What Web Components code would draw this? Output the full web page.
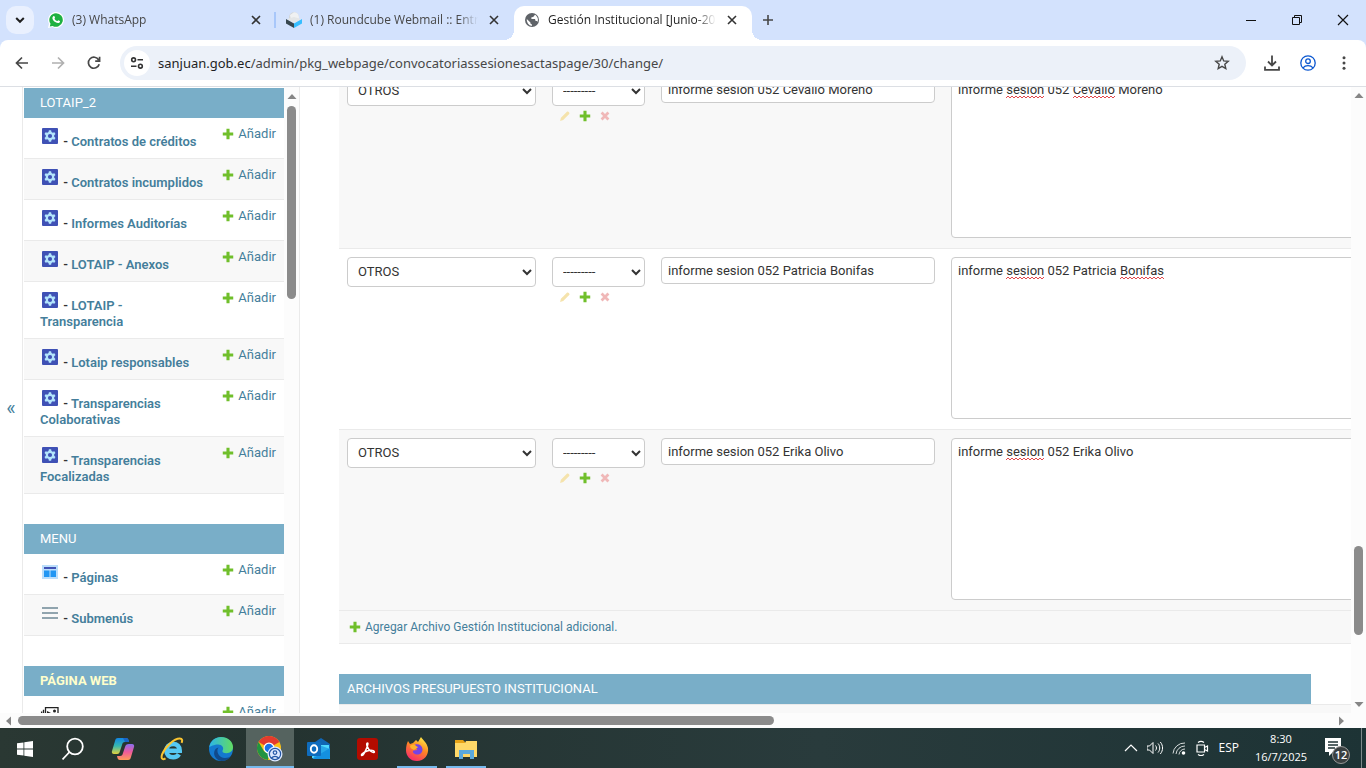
<!DOCTYPE html>
<html lang="es">
<head>
<meta charset="utf-8">
<title>Gestión Institucional [Junio-2025]</title>
<style>
	html, body { height: 100%; margin: 0; }
	body {
		display: flex;
		flex-direction: column;
		overflow: hidden;
		background: #fff;
		color: #333;
		font-family: Roboto, "Liberation Sans", sans-serif;
		font-size: 13px;
		line-height: 16px;
	}
	.view { flex: 1; min-height: 0; display: flex; }
</style>
</head>
<body>
<browser-tabs>
	<browser-tab icon="whatsapp" label="(3) WhatsApp"></browser-tab>
	<browser-tab icon="roundcube" label="(1) Roundcube Webmail :: Entrada"></browser-tab>
	<browser-tab icon="globe" label="Gestión Institucional [Junio-2025]" active></browser-tab>
</browser-tabs>
<browser-toolbar host="sanjuan.gob.ec" path="/admin/pkg_webpage/convocatoriassesionesactaspage/30/change/"></browser-toolbar>
<div class="view">
	<admin-sidebar>
		<admin-module caption="LOTAIP_2" items="gear:Contratos de créditos|gear:Contratos incumplidos|gear:Informes Auditorías|gear:LOTAIP - Anexos|gear:LOTAIP - Transparencia|gear:Lotaip responsables|gear:Transparencias Colaborativas|gear:Transparencias Focalizadas"></admin-module>
		<admin-module caption="MENU" items="layout:Páginas|lines:Submenús"></admin-module>
		<admin-module caption="PÁGINA WEB" current items="gallery:"></admin-module>
	</admin-sidebar>
	<admin-content>
		<inline-files></inline-files>
		<inline-heading>ARCHIVOS PRESUPUESTO INSTITUCIONAL</inline-heading>
	</admin-content>
	<scroll-bar style="--before: 445; --thumb: 89; --after: 64"></scroll-bar>
</div>
<scroll-bar horizontal style="--before: 4; --thumb: 756; --after: 562"></scroll-bar>
<task-bar></task-bar>

<script>
const ICONS = {
	whatsapp: `<svg viewBox="0 0 16 16"><path fill="#fff" d="M8 0a8 8 0 1 1-3.700 15.100L0 16l1-4.200A8 8 0 0 1 8 0z"/><path fill="#1fb141" d="M8 1.200a6.800 6.800 0 1 1-3.400 12.700L1.800 14.500l.7-2.700A6.800 6.800 0 0 1 8 1.200z"/><path fill="#fff" d="M5.300 4.200c.5-.4 1-.3 1.200.2l.5 1.200c.1.400-.5.900-.5 1.100.6 1.200 1.500 1.900 2.700 2.400.4.100.8-.9 1.200-.8l1.400.7c.4.200.2 1.200-.3 1.600-1 .9-2.500.6-4.300-.6S4.300 7.200 4.400 5.900c0-.7.400-1.300.9-1.700z"/></svg>`,
	roundcube: `<svg viewBox="0 0 16 16"><path fill="#37474f" d="M0 7l8 4.500V16L0 11.500z"/><path fill="#37beff" d="M16 7l-8 4.500V16l8-4.500z"/><circle cx="8" cy="5.200" r="5" fill="#d4d7d8"/><path fill="#f0f1f2" d="M8 .2a5 5 0 0 1 2.500 9.300L5 9 4 3z"/><path fill="#e4e6e7" d="M1 7l7-2 7 2-7 4z"/></svg>`,
	globe: `<svg viewBox="0 0 16 16"><circle cx="8" cy="8" r="7" fill="#5f6368"/><path fill="#fff" d="M2.800 7l3.600 3.500v1l1.500 1V14A6 6 0 0 1 2.800 7zM12.800 4.500c-.4-.9-1-1.400-1.800-1.800L9.200 5 7.500 5.300 7.200 6.700l1.300.4H11l.6 2h1.300l.5.900c1-2 .6-4-.6-5.500z"/></svg>`,
	close: `<svg viewBox="0 0 16 16"><path stroke="currentColor" stroke-width="1.600" d="M4 4l8 8M12 4l-8 8"/></svg>`,
	down: `<svg viewBox="0 0 16 16"><path fill="none" stroke="#1f1f1f" stroke-width="2" d="M4.200 6L8 9.800 11.800 6"/></svg>`,
	add: `<svg viewBox="0 0 16 16"><path stroke="#474747" stroke-width="1.600" d="M8 3v10M3 8h10"/></svg>`,
	min: `<svg viewBox="0 0 16 16"><path stroke="#111" d="M3 8.500h10"/></svg>`,
	restore: `<svg viewBox="0 0 16 16"><path fill="none" stroke="#111" d="M3.500 5.500h7v7h-7zM5.500 5.500v-2h7v7h-2"/></svg>`,
	exit: `<svg viewBox="0 0 16 16"><path stroke="#111" stroke-width="1.200" d="M3 3l10 10M13 3L3 13"/></svg>`,
	back: `<svg viewBox="0 0 16 16"><path fill="none" stroke="#474747" stroke-width="1.700" d="M14 8H3M8 2.500L2.500 8 8 13.500"/></svg>`,
	forward: `<svg viewBox="0 0 16 16"><path fill="none" stroke="#b0b0b0" stroke-width="1.700" d="M2 8h11M8 2.500L13.500 8 8 13.500"/></svg>`,
	reload: `<svg viewBox="0 0 16 16"><path fill="none" stroke="#474747" stroke-width="1.700" d="M13.200 9.200A5.500 5.500 0 1 1 12.700 5M13.600 1.800v4.400H9.200"/></svg>`,
	tune: `<svg viewBox="0 0 16 16"><g fill="none" stroke="#333" stroke-width="1.600"><circle cx="4.600" cy="4.800" r="1.900"/><path d="M8.500 4.800H14M2 11.200h5.500"/><circle cx="11.400" cy="11.200" r="1.900"/></g></svg>`,
	star: `<svg viewBox="0 0 16 16"><path fill="none" stroke="#474747" stroke-width="1.400" d="M8 1.800l1.700 4.100 4.500.4-3.400 2.900 1 4.400L8 11.300l-3.800 2.300 1-4.400-3.400-2.900 4.500-.4z"/></svg>`,
	download: `<svg viewBox="0 0 16 16"><path fill="none" stroke="#474747" stroke-width="1.800" d="M8 .5v9.500M4 6.500l4 4 4-4M1 11.500v3.300h14v-3.300"/></svg>`,
	profile: `<svg viewBox="0 0 16 16"><g fill="none" stroke="#0b57d0" stroke-width="1.300"><circle cx="8" cy="8" r="7.200"/><circle cx="8" cy="6.200" r="2.300"/><path d="M3 12.800c2.500-2.900 7.500-2.900 10 0"/></g></svg>`,
	dots: `<svg viewBox="0 0 16 16"><g fill="#474747"><circle cx="8" cy="2.700" r="1.500"/><circle cx="8" cy="8" r="1.500"/><circle cx="8" cy="13.300" r="1.500"/></g></svg>`,
	gear: `<svg viewBox="0 0 20 20"><rect x="2" y="2" width="16" height="16" rx="1" fill="#3f51b5"/><path fill="#b3e5fc" d="M8.900 4.300h2.200l.4 1.700 1.200.7 1.700-.5 1.100 1.900-1.300 1.200v1.400l1.300 1.200-1.100 1.900-1.700-.5-1.200.7-.4 1.700H8.900L8.500 14l-1.200-.7-1.700.5-1.100-1.900 1.300-1.200V9.300L4.500 8.100l1.100-1.900 1.700.5L8.500 6z"/><circle cx="10" cy="10" r="2.100" fill="#3f51b5"/></svg>`,
	layout: `<svg viewBox="0 0 20 20"><path fill="#bbdefb" d="M2 3h16v14H2z"/><path fill="#3f51b5" d="M4 5h12v2H4z"/><path fill="#2196f3" d="M4 8.500h5.500V15H4zM10.500 8.500H16V15h-5.500z"/></svg>`,
	lines: `<svg viewBox="0 0 20 20"><path stroke="#90a4ae" stroke-width="2" d="M2 5h16M2 10h16M2 15h16"/></svg>`,
	gallery: `<svg viewBox="0 0 20 20"><g fill="none" stroke="#222" stroke-width="1.300"><path d="M5.500 3.700H18v11H5.500zM3.500 5.700v11h12M1.600 7.500v11h12"/></g><path fill="#222" d="M7 7l4 2-4 5z"/><circle cx="14.500" cy="7" r="1.500" fill="#222"/></svg>`,
	plus: `<svg viewBox="0 0 14 14"><path fill="#70bf2b" d="M5.200.9h3.600v4.300h4.300v3.600H8.800v4.300H5.200V8.800H.9V5.200h4.300z"/></svg>`,
	pencil: `<svg viewBox="0 0 14 14"><path fill="#f5e3ac" d="M1.300 12.700l.9-3.600 7-7c1.300-1.300 4 1.400 2.700 2.700l-7 7z"/></svg>`,
	cross: `<svg viewBox="0 0 14 14"><path stroke="#f0b8b8" stroke-width="3.200" d="M3 3l8 8M11 3l-8 8"/></svg>`,
	windows: `<svg viewBox="0 0 24 24"><path fill="#fff" d="M4 6.300l6.500-.9v6.200H4zM11.300 5.300L20 4v7.600h-8.700zM4 12.400h6.500v6.200L4 17.700zM11.300 12.400H20V20l-8.700-1.300z"/></svg>`,
	search: `<svg viewBox="0 0 24 24"><g fill="none" stroke="#fff" stroke-width="1.800"><circle cx="13" cy="9.500" r="7.800"/><path d="M7.500 15L.5 22.500"/></g></svg>`,
	copilot: `<svg viewBox="0 0 24 24"><defs><linearGradient id="a" x2="0" y2="1"><stop stop-color="#1287e5"/><stop offset=".5" stop-color="#37b8b0"/><stop offset="1" stop-color="#e4d23d"/></linearGradient><linearGradient id="b" x2="0" y2="1"><stop stop-color="#8a6ff0"/><stop offset=".5" stop-color="#ef5a9b"/><stop offset="1" stop-color="#ff9a58"/></linearGradient></defs><path fill="url(#a)" d="M7 1h8c2 0 2.500 1.500 3 4h-4c-2 0-2.500 1-3 3l-2 6c-.5 2-1 3-3 3H3c-2 0-2.500-1.500-2-3L4 4c.5-2 1-3 3-3z"/><path fill="#1964c8" d="M12 1h3c2 0 2.500 1.500 3 4h-4z"/><path fill="url(#b)" d="M18 7h3c2 0 2.500 1.500 2 3l-3 10c-.5 2-1 3-3 3H9c-2 0-2.500-1.500-3-4h3c2 0 2.500-1 3-3l2-6c.5-2 1.500-3 4-3z"/></svg>`,
	ie: `<svg viewBox="0 0 24 24"><path fill="none" stroke="#56c8f2" stroke-width="4.600" d="M6.500 13.800h13.200c0-4.500-2.800-6.800-6.500-6.800-4 0-6.800 2.700-6.800 6.700s2.800 6.500 6.800 6.500c2.500 0 4.500-1 5.700-3"/><path fill="none" stroke="#fbc531" stroke-width="2" d="M5.500 21.300C2 23.500.8 21 2.200 17.200 4.800 10 14 1.500 19.800 1.500c2.700 0 2.700 2.200 1.800 4.400"/></svg>`,
	edge: `<svg viewBox="0 0 24 24"><defs><linearGradient id="e"><stop stop-color="#2cb5e8"/><stop offset="1" stop-color="#62dc62"/></linearGradient></defs><circle cx="12" cy="12" r="12" fill="#1479cf"/><path fill="url(#e)" d="M.2 10C1.500 3.500 6.500 0 12 0c7 0 12 4.700 12 10 0 4-3 6.200-6.500 6.200-3 0-4.500-1.200-4-2.400 2-3.200-.5-6.300-4.300-6.300C5 7.500 1.500 9.500.2 10z"/><path fill="#114a8b" d="M9.500 10.500c-3 4 .5 10.500 6.500 10.500 2.700 0 4.600-.8 6-2-2 3.200-5.500 5-9.700 5-5-1.200-8-5-7-9.500.5-2.200 2.200-3.700 4.200-4z"/></svg>`,
	chrome: `<svg viewBox="0 0 26 26"><circle cx="12" cy="12" r="12" fill="#fbc116"/><path fill="#e33b2e" d="M12 12L1.600 6a12 12 0 0 1 20.800 0z"/><path fill="#229342" d="M1.600 6L7 15.200 12 17.500 11 24A12 12 0 0 1 1.600 6z"/><circle cx="12" cy="12" r="5.500" fill="#fff"/><circle cx="12" cy="12" r="4.300" fill="#1a73e8"/><circle cx="18" cy="18" r="7.500" fill="#dce8ff"/><g fill="none" stroke="#2457a6" stroke-width="1.200"><circle cx="18" cy="18" r="5.600"/><circle cx="18" cy="16.600" r="1.800"/><path d="M14.400 22c2-2.300 5.200-2.300 7.200 0"/></g></svg>`,
	outlook: `<svg viewBox="0 0 24 24"><path fill="#1066b5" d="M5 7l9-6 9 6v14H5z"/><path fill="#50d9ff" d="M5 8h17v13H5z"/><path fill="#28a8ea" d="M12 8l11 4v10H6z"/><path fill="#1490df" d="M5 22l18-11v9c0 1.500-1 2-2 2z"/><rect y="5" width="14" height="14" rx="1" fill="#0f6cbd"/><ellipse cx="7" cy="12" rx="3.200" ry="3.700" fill="none" stroke="#fff" stroke-width="1.900"/></svg>`,
	acrobat: `<svg viewBox="0 0 24 24"><rect x="1" y="1" width="21" height="22" rx="3" fill="#b30b00"/><path fill="none" stroke="#fff" stroke-width="1.500" d="M11.500 6c-2 0 0 6 3.500 8.500 3 2 4.500.5 2.500-.7C14 12.500 8 14.500 6 17c-1.500 2 .5 2 2-.5 2-3.500 5-10.500 3.500-10.500z"/></svg>`,
	firefox: `<svg viewBox="0 0 24 24"><defs><linearGradient id="f" x1=".8" y1="0" x2=".3" y2="1"><stop stop-color="#fff04a"/><stop offset=".45" stop-color="#ff8a22"/><stop offset="1" stop-color="#f7286c"/></linearGradient></defs><path fill="url(#f)" d="M3 4l2 3 3-1 3-3 2 2 3-5c2 3 6 6 7 11 1 7-4 13-11 13S1 19 1 13c0-4 1-7 2-9z"/><path fill="#7542e5" d="M8 9c3-3 9-2 9.500 3 .2 4-3 6-6 5.500-3-.4-4.500-3-3-4l4-.5z"/><path fill="#ffb32b" d="M5 9c2-2 5-2 6 0l2 1c-1 2-3 1.500-4 3-2-1-4-2-4-4z"/></svg>`,
	explorer: `<svg viewBox="0 0 24 24"><path fill="#e8a317" d="M1 3h8l2 2v3H1z"/><path fill="#ffd868" d="M1 6h10l1-2h11v16H1z"/><path fill="#5ba9dc" d="M5 13h15v9h-4v-5H9v5H5z"/></svg>`,
	chevron: `<svg viewBox="0 0 16 16"><path fill="none" stroke="#fff" stroke-width="1.200" d="M2 11l6-6 6 6"/></svg>`,
	sound: `<svg viewBox="0 0 16 16"><path fill="none" stroke="#fff" d="M0 6h2.500L6 2.500v11L2.500 10H0zM8.500 5.500c1.300 1.500 1.300 3.500 0 5M11 3.500c2.300 2.500 2.300 6.500 0 9M13.300 2c3 3.500 3 8.500 0 12"/></svg>`,
	wifi: `<svg viewBox="0 0 16 16"><g fill="none" stroke="#d7dcdc"><path d="M2 13.500A11.500 11.500 0 0 1 14 3M5 14a9 9 0 0 1 9-8M8 14.500A6 6 0 0 1 14 9"/></g><circle cx="12.500" cy="13" r="1.800" fill="#fff"/></svg>`,
	camera: `<svg viewBox="0 0 16 16"><path fill="none" stroke="#fff" stroke-width="1.200" d="M2 5h7.500v7H2zM9.500 7.500l3-1.500v5l-3-1.500M3 2.500c2-1.500 4-1.500 6 0M3 14.500c2 1.500 4 1.500 6 0"/></svg>`,
	notice: `<svg viewBox="0 0 24 24"><path fill="#fff" d="M1 2h16v14H9l-4 4v-4H1z"/><path stroke="#203436" stroke-width="1.300" d="M4 6h10M4 9h10M4 12h7"/></svg>`
};

const BASE = `
	*, *::before { box-sizing: border-box; }
	svg { display: block; width: 100%; height: 100%; }
	button { display: flex; align-items: center; justify-content: center; padding: 0; border: 0; background: none; color: inherit; font: inherit; }
	a { color: #447e9b; text-decoration: none; }
	.i16 { flex: none; width: 16px; height: 16px; }
	.i20 { flex: none; width: 20px; height: 20px; }
	.i24 { flex: none; width: 24px; height: 24px; }
`;

const icon = (name, size = 'i16') => `<span class="${size}">${ICONS[name]}</span>`;

// attaches an open root to the element and fills it
const render = (el, css, html) => {
	el.attachShadow({ mode: 'open' }).innerHTML = `<style>${BASE}${css}</style>${html}`;
};

class BrowserTabs extends HTMLElement {
	connectedCallback() {
		render(this, `
			:host { display: flex; height: 40px; background: #d3e2fd; }
			.list { width: 28px; height: 28px; margin: 6px 4px 0 6px; border-radius: 10px; background: #e9f0fe; }
			.tabs { flex: 1; min-width: 0; display: flex; }
			.new { width: 28px; height: 28px; margin: 6px 2px; }
			.win { width: 46px; height: 40px; }
		`, `
			<button class="list" aria-label="Buscar pestañas">${icon('down')}</button>
			<div class="tabs"><slot></slot><button class="new" aria-label="Nueva pestaña">${icon('add')}</button></div>
			<button class="win" aria-label="Minimizar">${icon('min')}</button>
			<button class="win" aria-label="Restaurar">${icon('restore')}</button>
			<button class="win" aria-label="Cerrar">${icon('exit')}</button>
		`);
	}
}

class BrowserTab extends HTMLElement {
	connectedCallback() {
		render(this, `
			:host {
				flex: 0 1 238px;
				min-width: 0;
				box-sizing: border-box;
				display: flex;
				align-items: center;
				gap: 8px;
				height: 40px;
				padding: 0 12px 0 10px;
				color: #474747;
				font-family: "Open Sans", "Noto Sans", sans-serif;
				font-size: 12px;
			}
			:host([icon="whatsapp"]) { background: linear-gradient(#a8c7fa, #a8c7fa) right center / 2px 16px no-repeat; }
			:host([active]) { position: relative; margin-top: 6px; height: 34px; padding-bottom: 6px; border-radius: 10px 10px 0 0; background: #fff; color: #1f1f1f; }
			:host([active])::before, :host([active])::after { content: ""; position: absolute; bottom: 0; width: 10px; height: 10px; }
			:host([active])::before { left: -10px; background: radial-gradient(circle at 0 0, transparent 10px, #fff 10px); }
			:host([active])::after { right: -10px; background: radial-gradient(circle at 100% 0, transparent 10px, #fff 10px); }
			.label { flex: 1; min-width: 0; overflow: hidden; white-space: nowrap; -webkit-mask-image: linear-gradient(90deg, #000 calc(100% - 20px), transparent); }
			button { width: 16px; height: 16px; color: #333; }
		`, `
			${icon(this.getAttribute('icon'))}
			<span class="label">${this.getAttribute('label')}</span>
			<button aria-label="Cerrar pestaña">${icon('close')}</button>
		`);
	}
}

class BrowserToolbar extends HTMLElement {
	connectedCallback() {
		render(this, `
			:host { display: block; background: #d3e2fd; }
			.bar { display: flex; align-items: center; gap: 16px; height: 47px; padding: 0 12px; border-bottom: 1px solid #dcdfe4; border-radius: 8px 8px 0 0; background: #fff; }
			button { width: 20px; height: 20px; }
			.omni { flex: 1; min-width: 0; display: flex; align-items: center; gap: 8px; height: 34px; padding: 0 14px 0 4px; border-radius: 17px; background: #ecf1f9; }
			.site { width: 26px; height: 26px; border-radius: 50%; background: #fff; }
			.url { flex: 1; overflow: hidden; white-space: nowrap; color: #474747; font-family: "Noto Sans", "Open Sans", sans-serif; font-size: 13px; line-height: 20px; }
			b { color: #1f1f1f; font-weight: normal; }
		`, `
			<div class="bar">
				<button aria-label="Atrás">${icon('back')}</button>
				<button aria-label="Adelante">${icon('forward')}</button>
				<button aria-label="Volver a cargar">${icon('reload')}</button>
				<div class="omni">
					<button class="site" aria-label="Información del sitio">${icon('tune')}</button>
					<span class="url"><b>${this.getAttribute('host')}</b>${this.getAttribute('path')}</span>
					<button aria-label="Favorito">${icon('star')}</button>
				</div>
				<button aria-label="Descargas">${icon('download')}</button>
				<button aria-label="Perfil">${icon('profile')}</button>
				<button aria-label="Menú">${icon('dots')}</button>
			</div>
		`);
	}
}

class ScrollBar extends HTMLElement {
	connectedCallback() {
		render(this, `
			:host { flex: none; display: flex; flex-direction: column; align-items: center; width: 15px; background: #fcfcfc; }
			:host([horizontal]) { flex-direction: row; width: auto; height: 15px; padding-right: 16px; }
			.arrow { flex: none; width: 14px; height: 14px; fill: #868686; }
			.before { flex: var(--before) 0 0px; }
			.after { flex: var(--after) 0 0px; }
			.thumb { flex: var(--thumb) 0 0px; width: 9px; border-radius: 5px; background: #8b8b8b; }
			:host([horizontal]) .thumb { width: auto; height: 9px; }
			:host([horizontal]) svg { transform: rotate(-90deg); }
			:host([open-end]) .arrow:last-child { display: none; }
		`, `
			<span class="arrow"><svg viewBox="0 0 14 14"><path d="M2.500 11L7 6l4.500 5z"/></svg></span>
			<span class="before"></span><span class="thumb"></span><span class="after"></span>
			<span class="arrow"><svg viewBox="0 0 14 14"><path d="M2.500 3L7 8l4.500-5z"/></svg></span>
		`);
	}
}

class AdminSidebar extends HTMLElement {
	connectedCallback() {
		render(this, `
			:host { flex: none; display: flex; overflow: hidden; border-right: 1px solid #eaeaea; }
			.toggle { width: 23px; padding-top: 16px; border-right: 1px solid #eaeaea; color: #447e9b; font-size: 20px; }
			nav { width: 260px; margin: 1px 0 0 1px; display: flex; flex-direction: column; gap: 30px; overflow: hidden; }
			scroll-bar { padding-top: 1px; }
		`, `
			<button class="toggle" aria-label="Conmutar navegación">«</button>
			<nav><slot></slot></nav>
			<scroll-bar open-end style="--before: 4; --thumb: 193; --after: 414"></scroll-bar>
		`);
	}
}

class AdminModule extends HTMLElement {
	connectedCallback() {
		const rows = this.getAttribute('items').split('|').map((item) => {
			const [glyph, name] = item.split(':');
			return `<tr>
				<th scope="row">${icon(glyph, 'i20 glyph')}${name ? ` - <a href="#">${name}</a>` : ''}</th>
				<td><a class="add" href="#">${icon('plus')}Añadir</a></td>
			</tr>`;
		}).join('');
		render(this, `
			:host { flex: none; display: block; }
			table { width: 100%; border-collapse: collapse; }
			caption { height: 30px; padding: 7px 16px; background: #79aec8; text-align: left; }
			caption a { display: block; color: #fff; }
			:host([current]) caption a { color: #ffc; font-weight: bold; }
			th, td { padding: 8px; border-bottom: 1px solid #eaeaea; vertical-align: top; text-align: left; }
			th { padding-left: 16px; font-weight: 600; }
			td { width: 69px; white-space: nowrap; }
			tr:nth-child(even) { background: #f8f8f8; }
			.glyph { display: inline-block; vertical-align: baseline; }
			.add { display: flex; }
			.add .i16 { padding: 2px 4px 2px 0; }
		`, `<table><caption><a href="#">${this.getAttribute('caption')}</a></caption><tbody>${rows}</tbody></table>`);
	}
}

class AdminContent extends HTMLElement {
	connectedCallback() {
		render(this, `
			:host { flex: 1; min-width: 0; display: block; overflow: hidden; padding-left: 39px; }
		`, `<slot></slot>`);
		// the first row is partly scrolled out
		requestAnimationFrame(() => { this.scrollTop = 19; });
	}
}

// marks are [left, width] pairs of the words flagged by the spelling check
const FILES = [
	{ name: 'informe sesion 052 Cevallo Moreno', marks: [[48, 38], [115, 42]] },
	{ name: 'informe sesion 052 Patricia Bonifas', marks: [[48, 38], [162, 44]] },
	{ name: 'informe sesion 052 Erika Olivo', marks: [[48, 38]] }
];

const wave = ([left, width]) => {
	let d = 'M0 3';
	for (let x = 2; x <= width; x += 2) d += `L${x} ${x % 4 ? 1 : 3}`;
	return `<svg class="wave" style="left: ${left + 7}px; width: ${width}px" viewBox="0 0 ${width} 4"><path d="${d}" fill="none" stroke="#e2474b"/></svg>`;
};

class InlineFiles extends HTMLElement {
	connectedCallback() {
		const rows = FILES.map(({ name, marks }) => `<tr>
			<td><select class="kind" aria-label="Tipo"><option>OTROS</option></select></td>
			<td>
				<select class="rel" aria-label="Mes"><option>---------</option></select>
				<div class="tools">
					<a href="#" aria-label="Modificar">${ICONS.pencil}</a>
					<a href="#" aria-label="Añadir">${ICONS.plus}</a>
					<a href="#" aria-label="Eliminar">${ICONS.cross}</a>
				</div>
			</td>
			<td><input type="text" aria-label="Nombre" value="${name}"></td>
			<td><div class="area"><textarea aria-label="Descripción" spellcheck="false">${name}</textarea>${marks.map(wave).join('')}</div></td>
		</tr>`).join('');
		render(this, `
			:host { display: block; width: max-content; }
			table { border-collapse: collapse; }
			td { padding: 8px; border-bottom: 1px solid #eaeaea; vertical-align: top; }
			tr:nth-child(odd) { background: #f8f8f8; }
			select, input, textarea { display: block; margin: 0; border: 1px solid #ccc; border-radius: 4px; background: #fff; color: #333; font: inherit; }
			select { height: 30px; padding: 4px 6px 6px; }
			.kind { width: 189px; }
			.rel { width: 93px; }
			input { width: 274px; height: 27px; padding: 5px 6px; }
			.area { position: relative; padding-bottom: 2px; }
			textarea { width: 610px; height: 162px; padding: 5px 6px; resize: none; }
			.wave { position: absolute; top: 19px; height: 4px; }
			.tools { display: flex; gap: 8px; padding: 4px 7px; }
			.tools a { width: 12px; height: 12px; }
			.more { padding: 8px 10px; }
			.more a { display: flex; font-size: 12px; }
			tr.foot { background: #f8f8f8; }
			.more .i16 { padding: 2px 4px 2px 0; }
		`, `<table><tbody>${rows}
			<tr class="foot"><td class="more" colspan="4"><a href="#">${icon('plus')}Agregar Archivo Gestión Institucional adicional.</a></td></tr>
		</tbody></table>`);
	}
}

class InlineHeading extends HTMLElement {
	connectedCallback() {
		render(this, `
			:host { display: block; margin-top: 30px; }
			h2 { height: 30px; margin: 0 40px 0 0; padding: 7px 8px; background: #79aec8; color: #fff; font-size: 13px; font-weight: 400; }
			.body { height: 180px; border-top: 1px solid #eaeaea; background: #f8f8f8; }
		`, `<h2><slot></slot></h2><div class="body"></div>`);
	}
}

class TaskBar extends HTMLElement {
	connectedCallback() {
		const apps = [
			['windows', 'Inicio'], ['search', 'Buscar'], ['copilot', 'Copilot'], ['ie', 'Internet Explorer'], ['edge', 'Edge'],
			['chrome', 'Chrome', 'active'], ['outlook', 'Outlook'], ['acrobat', 'Acrobat'], ['firefox', 'Firefox', 'open'], ['explorer', 'Explorador', 'open']
		];
		render(this, `
			:host { flex: none; display: flex; justify-content: space-between; height: 40px; background: linear-gradient(90deg, #2a3833, #243330 20%, #293b3c 60%, #1d3335); color: #fff; font-family: "Open Sans", "Noto Sans", sans-serif; font-size: 12px; }
			.apps { display: flex; gap: 1px; padding-left: 1px; }
			.apps button { width: 48px; height: 40px; border: solid transparent; border-width: 3px 0 2px; }
			.apps .active { background: #55635f; border-bottom-color: #76b9ed; }
			.apps .active .i24 { width: 26px; height: 26px; }
			.apps .open { width: 40px; margin: 0 4px; border-bottom-color: #76b9ed; }
			.tray { display: flex; align-items: center; gap: 8px; }
			.tray > button { width: 16px; height: 40px; }
			.tray .lang { width: auto; }
			time { width: 68px; text-align: center; font-size: 11px; line-height: 18px; }
			.tray .notice { position: relative; width: 26px; margin-right: 12px; }
			.count { position: absolute; left: 9px; top: 18px; width: 18px; height: 18px; border: 1px solid #999; border-radius: 50%; background: #3a4041; font-size: 11px; line-height: 16px; font-weight: 600; }
			.desk { width: 5px; height: 40px; border-left: 1px solid #7d898a; margin-left: -8px; }
		`, `
			<div class="apps">${apps.map(([name, label, state = '']) => `<button class="${state}" aria-label="${label}">${icon(name, 'i24')}</button>`).join('')}</div>
			<div class="tray">
				<button aria-label="Iconos ocultos">${icon('chevron')}</button>
				<button aria-label="Volumen">${icon('sound')}</button>
				<button aria-label="Red">${icon('wifi')}</button>
				<button aria-label="Reunión">${icon('camera')}</button>
				<button class="lang">ESP</button>
				<time>8:30<br>16/7/2025</time>
				<button class="notice" aria-label="Notificaciones">${icon('notice', 'i24')}<span class="count">12</span></button>
				<span class="desk"></span>
			</div>
		`);
	}
}

customElements.define('scroll-bar', ScrollBar);
customElements.define('browser-tab', BrowserTab);
customElements.define('browser-tabs', BrowserTabs);
customElements.define('browser-toolbar', BrowserToolbar);
customElements.define('admin-module', AdminModule);
customElements.define('admin-sidebar', AdminSidebar);
customElements.define('inline-files', InlineFiles);
customElements.define('inline-heading', InlineHeading);
customElements.define('admin-content', AdminContent);
customElements.define('task-bar', TaskBar);
</script>
</body>
</html>
